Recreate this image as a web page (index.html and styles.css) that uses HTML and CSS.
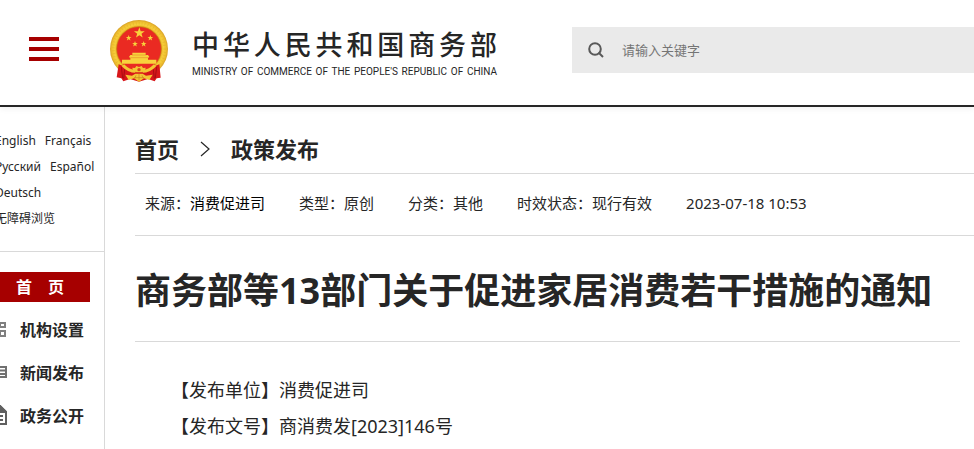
FILE: index.html
```html
<!DOCTYPE html>
<html lang="zh-CN">
<head>
  <meta charset="UTF-8">
  <meta name="viewport" content="width=device-width, initial-scale=1">
  <title>商务部等13部门关于促进家居消费若干措施的通知</title>
  <link rel="stylesheet" href="styles.css">
</head>
<body>

  <header class="header">
    <button type="button" class="menu-btn" aria-label="菜单">
      <span></span>
      <span></span>
      <span></span>
    </button>

    <a class="logo" href="#">
      <svg class="emblem" viewBox="330 60 174 186" aria-hidden="true">
        <defs>
          <radialGradient id="gold" gradientUnits="userSpaceOnUse" cx="417" cy="147" r="87">
            <stop offset="0.75" stop-color="#e6a91c"/>
            <stop offset="0.84" stop-color="#f6cf3c"/>
            <stop offset="0.93" stop-color="#f0c030"/>
            <stop offset="1" stop-color="#d6a028"/>
          </radialGradient>
          <path id="star" d="M0-10 2.4-3.2 9.5-3.1 3.8 1.2 5.9 8.1 0 4-5.9 8.1-3.8 1.2-9.5-3.1-2.4-3.2Z"/>
        </defs>
        <!-- wreath -->
        <circle cx="417" cy="147" r="87" fill="url(#gold)"/>
        <circle cx="417" cy="147" r="77" fill="none" stroke="#c98a15" stroke-width="8" stroke-dasharray="2 7" opacity="0.25"/>
        <circle cx="417" cy="147" r="67" fill="#ea2a22" stroke="#c47a12" stroke-width="2"/>
        <!-- stars -->
        <g fill="#f8d23c">
          <use href="#star" transform="translate(418 99) scale(1.7)"/>
          <use href="#star" transform="translate(386 114) scale(0.9)"/>
          <use href="#star" transform="translate(451 114) scale(0.9)"/>
          <use href="#star" transform="translate(405 132) scale(0.9)"/>
          <use href="#star" transform="translate(431 132) scale(0.9)"/>
        </g>
        <!-- gate -->
        <path fill="#f8d23c" d="M397 158h40v7h7l4 6-4 3v5h25v12H366v-12h25v-5l-4-3 4-6h6Z"/>
        <path stroke="#d8481c" stroke-width="1" d="M396 165h43M391 173h54"/>
        <!-- drapes -->
        <path fill="#d8161a" d="M356 193c10 4 20 10 30 13l31 8 31-8c10-3 20-9 30-13l4 40-12 2-6 9-20-7-27 8-27-8-20 7-6-9-14-3Z"/>
        <path fill="none" stroke="#a80e12" stroke-width="3" d="M364 201l4 33M374 208l-3 28M470 201l-4 33M460 208l3 28"/>
        <!-- gear and ribbon -->
        <path fill="none" stroke="#f3c634" stroke-width="9" d="M369 196c13 13 25 18 37 18M465 196c-13 13-25 18-37 18"/>
        <path fill="#f3c634" d="M397 203l8 1 4-6 8 3 8-3 4 6 8-1-2 10-10 4h-16l-10-4Z"/>
        <circle cx="417" cy="209" r="5" fill="#d8481c"/>
        <path fill="#f3c634" d="M376 224l20 3 10-6h22l10 6 20-3-10 16-16-5-15 10-15-10-16 5Z"/>
        <path stroke="#c9821b" stroke-width="2" fill="none" d="M402 233h30M408 226l-4 10M426 226l4 10M417 222v19"/>
      </svg>
      <span class="logo-text">
        <span class="logo-cn">中华人民共和国商务部</span>
        <span class="logo-en">MINISTRY OF COMMERCE OF THE PEOPLE'S REPUBLIC OF CHINA</span>
      </span>
    </a>

    <form class="search" role="search">
      <button type="submit" class="search-btn" aria-label="搜索">
        <svg width="16" height="16" viewBox="0 0 16 16" fill="none" stroke="#595959" stroke-width="2">
          <circle cx="7" cy="7" r="5.8"/>
          <path d="M10.5 10.5 15 15"/>
        </svg>
      </button>
      <input type="text" class="search-input" placeholder="请输入关键字" aria-label="请输入关键字">
    </form>
  </header>

  <div class="page">
    <aside class="sidebar">
      <div class="langs">
        <p><a href="#">English</a><a href="#">Français</a></p>
        <p><a href="#">Русский</a><a href="#">Español</a></p>
        <p><a href="#">Deutsch</a></p>
        <p><a href="#">无障碍浏览</a></p>
      </div>

      <nav class="nav">
        <a class="nav-home" href="#">首&emsp;页</a>
        <a class="nav-item" href="#">
          <svg width="17" height="18" viewBox="0 0 17 18" fill="none" stroke="#808080" stroke-width="2">
            <path d="M1 2h5v5H1zM10 3h5v4h-5zM1 11h5v5H1zM10 11h5v5h-5z"/>
          </svg>
          机构设置
        </a>
        <a class="nav-item" href="#">
          <svg width="17" height="18" viewBox="0 0 17 18" fill="none" stroke="#707070" stroke-width="2">
            <path d="M1 4h15v10H1zM5 7.500h11M5 11h11"/>
          </svg>
          新闻发布
        </a>
        <a class="nav-item" href="#">
          <svg width="17" height="20" viewBox="0 0 17 20" fill="none" stroke="#606060" stroke-width="2">
            <path d="M2 1h8l6 6v12H2zM5 11h8M5 15h8"/>
            <path d="M10 1v6h6z" fill="#606060"/>
          </svg>
          政务公开
        </a>
      </nav>
    </aside>

    <main class="main">
      <nav class="crumbs">
        <a href="#">首页</a>
        <svg width="10" height="16" viewBox="0 0 10 16" fill="none" stroke="#262626" stroke-width="1.2">
          <path d="M1 1 9 8 1 15"/>
        </svg>
        <a href="#">政策发布</a>
      </nav>

      <div class="meta">
        <span>来源：<a href="#">消费促进司</a></span>
        <span>类型：原创</span>
        <span>分类：其他</span>
        <span>时效状态：现行有效</span>
        <span>2023-07-18 10:53</span>
      </div>

      <article class="article">
        <h1>商务部等13部门关于促进家居消费若干措施的通知</h1>
        <div class="content">
          <p>【发布单位】消费促进司</p>
          <p>【发布文号】商消费发[2023]146号</p>
        </div>
      </article>
    </main>
  </div>

</body>
</html>
```
FILE: styles.css
```css
* {
  box-sizing: border-box;
}

body {
  margin: 0;
  font-family: "Noto Sans", "Noto Sans CJK SC", sans-serif;
  color: #262626;
  background: #fff;
}

a {
  color: inherit;
  text-decoration: none;
}

p {
  margin: 0;
}

svg {
  display: block;
  flex-shrink: 0;
}

/* Header */
.header {
  position: relative;
  display: flex;
  align-items: center;
  height: 107px;
  padding: 0 0 4px 29px;
  border-bottom: 2px solid #262626;
  box-shadow: 0 2px 6px rgba(0, 0, 0, 0.06);
}

.menu-btn {
  display: flex;
  flex-direction: column;
  gap: 6px;
  width: 30px;
  margin-right: 51px;
  padding: 0 0 4px;
  border: none;
  background: none;
  cursor: pointer;
}

.menu-btn span {
  width: 100%;
  height: 4px;
  background: #a60000;
}

.logo {
  display: flex;
  align-items: center;
  gap: 24px;
  margin-right: 75px;
}

.emblem {
  width: 58px;
  height: 62px;
}

/* both lines are justified to the same width */
.logo-text {
  display: flex;
  flex-direction: column;
  width: 305px;
  padding-top: 6px;
  white-space: nowrap;
  text-align-last: justify;
}

.logo-cn {
  font-size: 27px;
  font-weight: 500;
  line-height: 36px;
}

.logo-en {
  font-family: Roboto, Arial, sans-serif;
  font-size: 10px;
  line-height: 18px;
}

.search {
  flex: 1;
  display: flex;
  align-items: center;
  height: 46px;
  margin-bottom: 2px;
  background: #eaeaea;
}

.search-btn {
  padding: 0 18px 0 16px;
  border: none;
  background: none;
  cursor: pointer;
}

.search-input {
  flex: 1;
  min-width: 0;
  padding: 0;
  border: none;
  outline: none;
  background: none;
  font-family: inherit;
  font-size: 13px;
}

.search-input::placeholder {
  color: #757575;
}

/* Layout */
.page {
  display: flex;
  min-height: calc(100vh - 107px);
}

/* the sidebar is pulled a little past the window edge */
.sidebar {
  flex: 0 0 115px;
  margin-left: -10px;
  border-right: 1px solid #d9d9d9;
}

.langs {
  padding: 21px 0 19px 5px;
  border-bottom: 1px solid #d9d9d9;
  font-size: 12px;
  line-height: 26px;
  white-space: nowrap;
}

.langs p {
  display: flex;
  gap: 9px;
}

.nav {
  padding-top: 20px;
  font-size: 16px;
  font-weight: 700;
}

.nav-home {
  display: block;
  width: 100px;
  margin-bottom: 5px;
  line-height: 30px;
  text-align: center;
  color: #fff;
  background: #a60000;
}

.nav-item {
  display: flex;
  align-items: center;
  gap: 13px;
  height: 43px;
}

/* Main column */
.main {
  flex: 1;
  min-width: 0;
  padding-left: 30px;
}

.crumbs {
  display: flex;
  align-items: center;
  gap: 21px;
  padding: 25px 0 7px;
  border-bottom: 1px solid #d9d9d9;
  font-size: 22px;
  font-weight: 700;
  line-height: 34px;
}

.meta {
  display: flex;
  flex-wrap: wrap;
  gap: 0 34px;
  padding: 14px 10px 16px;
  border-bottom: 1px solid #d9d9d9;
  font-size: 15px;
  line-height: 31px;
}

.meta a {
  color: #000;
}

.article {
  margin-right: 14px;
}

.article h1 {
  margin: 0;
  padding: 30px 0 25px;
  border-bottom: 1px solid #d9d9d9;
  font-size: 36px;
  font-weight: 700;
  line-height: 50px;
}

.content {
  padding: 30px 0 5px;
  font-size: 18px;
  line-height: 36px;
}

.content p {
  text-indent: 36px;
}
```
